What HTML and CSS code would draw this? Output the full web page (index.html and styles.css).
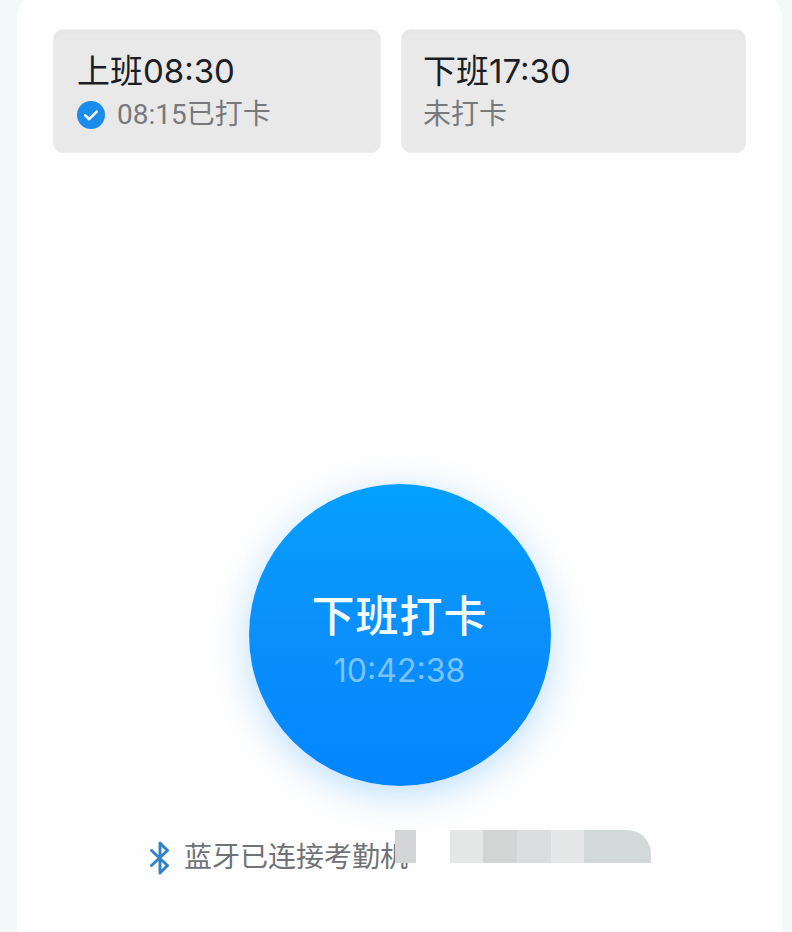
FILE: index.html
```html
<!DOCTYPE html>
<html lang="zh-CN">
<head>
  <meta charset="UTF-8">
  <title>打卡</title>
  <link rel="stylesheet" href="styles.css">
</head>
<body>
  <div class="panel">
    <!-- Shift cards -->
    <div class="shifts">
      <div class="shift-card">
        <div class="shift-title">上班08:30</div>
        <div class="shift-status">
          <svg class="check-icon" viewBox="0 0 28 28" aria-hidden="true">
            <circle cx="14" cy="14" r="14" fill="#1a8ceb"/>
            <path d="M8.2 14.4l4 3.8 7.6-7.6" fill="none" stroke="#fff" stroke-width="2.6" stroke-linecap="round" stroke-linejoin="round"/>
          </svg>
          <span>08:15已打卡</span>
        </div>
      </div>
      <div class="shift-card shift-card-end">
        <div class="shift-title">下班17:30</div>
        <div class="shift-status"><span>未打卡</span></div>
      </div>
    </div>

    <!-- Clock button -->
    <div class="clock-area">
      <button class="clock-button">
        <span class="clock-label">下班打卡</span>
        <span class="clock-time">10:42:38</span>
      </button>
    </div>

    <!-- Bluetooth status -->
    <div class="bluetooth">
      <svg class="bluetooth-icon" viewBox="0 0 22 34" aria-hidden="true">
        <path d="M2.5 9.5L18.5 24.5L11 32V2L18.5 9.5L2.5 24.5" fill="none" stroke="#3384c6" stroke-width="3" stroke-linejoin="round" stroke-linecap="round"/>
      </svg>
      <span class="bluetooth-text">蓝牙已连接考勤机</span>
      <div class="mosaic">
        <div class="mosaic-cell cell-a"></div>
        <div class="mosaic-cell cell-b"></div>
        <div class="mosaic-cell cell-c"></div>
        <div class="mosaic-cell cell-d"></div>
        <div class="mosaic-cell cell-e"></div>
        <div class="mosaic-cell cell-f"></div>
        <div class="mosaic-cell cell-g"></div>
      </div>
    </div>
  </div>
</body>
</html>
```

FILE: styles.css
```css
* {
  box-sizing: border-box;
}

html,
body {
  height: 100%;
}

body {
  margin: 0;
  padding: 0 10px 0 17px;
  overflow: hidden;
  background-color: #f3f8f9;
  font-family: Roboto, "Noto Sans CJK SC", sans-serif;
}

.panel {
  position: relative;
  height: 940px;
  margin-top: -8px;
  padding: 37px 36px 0;
  background-color: #fefefe;
  border-radius: 26px 26px 0 0;
}

/* Shift cards */
.shifts {
  display: grid;
  grid-template-columns: 328px 345px;
  gap: 20px;
}

.shift-card {
  height: 124px;
  padding: 19px 23px;
  background-color: #e9e9e9;
  border: 1px solid #ededed;
  border-radius: 10px;
  box-shadow: inset 0 4px 0 #e7e7e7;
}

.shift-card-end {
  padding-left: 21px;
}

.shift-title {
  font-family: Inter, "Noto Sans CJK SC", sans-serif;
  font-size: 33px;
  line-height: 44px;
  color: #1b1e24;
}

.shift-status {
  display: flex;
  align-items: center;
  gap: 12px;
  margin-top: 3px;
  font-size: 28px;
  line-height: 38px;
  color: #77797c;
}

.check-icon {
  width: 28px;
  height: 28px;
  flex-shrink: 0;
}

/* Clock button */
.clock-area {
  display: flex;
  justify-content: center;
  margin-top: 331px;
}

.clock-button {
  display: flex;
  flex-direction: column;
  align-items: center;
  width: 302px;
  height: 302px;
  padding: 105px 0 0;
  border: none;
  border-radius: 50%;
  background: linear-gradient(180deg, #04a0fd 0%, #0b8ffb 50%, #0285fe 100%);
  box-shadow: 0 8px 36px rgba(30, 150, 250, 0.3);
  font-family: inherit;
}

.clock-label {
  font-size: 43px;
  font-weight: 500;
  line-height: 56px;
  letter-spacing: 1px;
  color: #f4fbfb;
}

.clock-time {
  margin-top: 5px;
  font-family: Inter, sans-serif;
  font-size: 32px;
  line-height: 42px;
  color: #7cc4f7;
}

/* Bluetooth status */
.bluetooth {
  position: relative;
  display: flex;
  align-items: center;
  gap: 13px;
  margin-top: 50px;
  padding-left: 96px;
  height: 44px;
}

.bluetooth-icon {
  width: 22px;
  height: 34px;
  flex-shrink: 0;
}

.bluetooth-text {
  white-space: nowrap;
  font-size: 28px;
  line-height: 44px;
  color: #6f7276;
}

/* Blurred-out part of the device name */
.mosaic {
  position: absolute;
  left: 342px;
  top: -6px;
  display: flex;
  height: 33px;
}

.mosaic-cell {
  height: 100%;
}

.cell-a { width: 21px; background-color: #d3d5d6; }
.cell-b { width: 34px; background-color: #fefefe; }
.cell-c { width: 33px; background-color: #e6e7e7; }
.cell-d { width: 34px; background-color: #d3d5d5; }
.cell-e { width: 34px; background-color: #dadcdd; }
.cell-f { width: 33px; background-color: #e6e8e8; }
.cell-g { width: 67px; background-color: #d3d9d8; border-top-right-radius: 24px; }
```
